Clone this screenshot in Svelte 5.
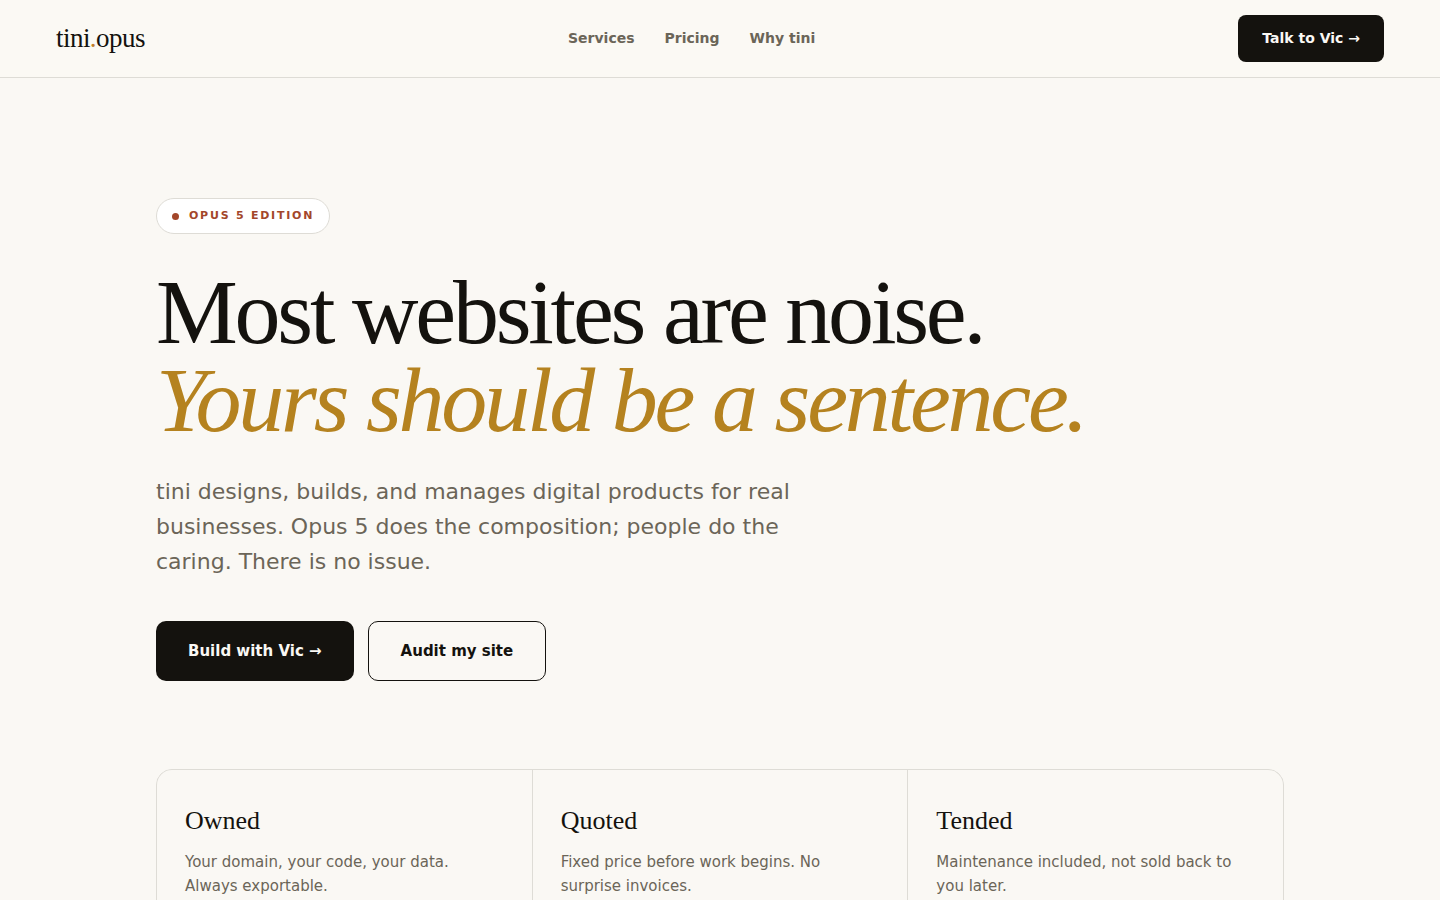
<script lang="ts">
  const links = [
    { label: "Services", href: "#services" },
    { label: "Pricing", href: "#pricing" },
    { label: "Why tini", href: "#why" },
  ];

  const promises = [
    { title: "Owned", text: "Your domain, your code, your data. Always exportable." },
    { title: "Quoted", text: "Fixed price before work begins. No surprise invoices." },
    { title: "Tended", text: "Maintenance included, not sold back to you later." },
  ];
</script>

<header>
  <a class="logo" href="#top">tini<span>.</span>opus</a>
  <nav>
    {#each links as link}
      <a href={link.href}>{link.label}</a>
    {/each}
  </nav>
  <button class="talk">Talk to Vic →</button>
</header>

<main id="top">
  <p class="badge"><i></i>Opus 5 edition</p>
  <h1>Most websites are noise.<br /><em>Yours should be a sentence.</em></h1>
  <p class="lead">
    tini designs, builds, and manages digital products for real businesses. Opus 5 does the
    composition; people do the caring. There is no issue.
  </p>
  <div class="actions">
    <button>Build with Vic →</button>
    <button class="outline">Audit my site</button>
  </div>

  <section id="why">
    {#each promises as promise}
      <article>
        <h2>{promise.title}</h2>
        <p>{promise.text}</p>
      </article>
    {/each}
  </section>
</main>

<style>
  :global(body) {
    background: #faf8f4;
    color: #14120e;
    font-family: "DejaVu Sans", sans-serif;
    overflow-x: hidden;
  }

  header {
    align-items: center;
    background: #fbf9f4;
    border-bottom: 1px solid #dedcd6;
    display: flex;
    justify-content: space-between;
    padding: 15px 56px;
  }

  a {
    color: inherit;
    text-decoration: none;
  }

  .logo {
    font-family: "Liberation Serif", serif;
    font-size: 27px;
    letter-spacing: -0.02em;
  }

  .logo span {
    color: #c07d2a;
  }

  nav {
    color: #6b6558;
    display: flex;
    font-size: 14px;
    font-weight: 600;
    gap: 30px;
    line-height: 17px;
  }

  button {
    background: #14120e;
    border: 0;
    border-radius: 10px;
    color: #faf8f4;
    cursor: pointer;
    font-family: inherit;
    font-size: 15px;
    font-weight: 600;
    line-height: 18px;
    padding: 20px 32px;
  }

  .talk {
    border-radius: 8px;
    font-size: 14px;
    line-height: 17px;
    padding: 15px 24px;
  }

  .outline {
    background: transparent;
    border: 1px solid #14120e;
    color: #14120e;
  }

  main {
    margin: 0 auto;
    max-width: 1128px;
    padding: 120px 56px 96px;
  }

  .badge {
    align-items: center;
    background: #fff;
    border: 1px solid #dedcd6;
    border-radius: 99px;
    color: #a3462a;
    display: inline-flex;
    font-size: 11px;
    font-weight: 700;
    gap: 10px;
    letter-spacing: 0.16em;
    line-height: 18px;
    margin: 0 0 34px;
    padding: 8px 15px;
    text-transform: uppercase;
  }

  .badge i {
    background: #a3462a;
    border-radius: 50%;
    height: 7px;
    width: 7px;
  }

  h1 {
    font-family: "Liberation Serif", serif;
    font-size: 92px;
    font-weight: 400;
    letter-spacing: -0.035em;
    line-height: 88px;
    margin: 0 0 30px;
  }

  h1 em {
    color: #b5821f;
  }

  .lead {
    color: #6b6558;
    font-size: 22px;
    line-height: 35px;
    margin: 0 0 42px;
    max-width: 660px;
  }

  .actions {
    display: flex;
    flex-wrap: wrap;
    gap: 14px;
  }

  section {
    background: #dedcd6;
    border: 1px solid #dedcd6;
    border-radius: 16px;
    display: grid;
    gap: 1px;
    grid-template-columns: repeat(3, 1fr);
    margin-top: 88px;
    overflow: hidden;
  }

  article {
    background: #faf8f4;
    padding: 36px 28px;
  }

  h2 {
    font-family: "Liberation Serif", serif;
    font-size: 26px;
    font-weight: 400;
    line-height: 30px;
    margin: 0 0 14px;
  }

  article p {
    color: #6b6558;
    font-size: 15px;
    line-height: 24px;
    margin: 0;
  }

  @media (max-width: 800px) {
    header {
      padding: 15px 24px;
    }

    nav {
      display: none;
    }

    main {
      padding: 64px 24px;
    }

    h1 {
      font-size: 48px;
      line-height: 50px;
    }

    section {
      grid-template-columns: 1fr;
    }
  }
</style>
